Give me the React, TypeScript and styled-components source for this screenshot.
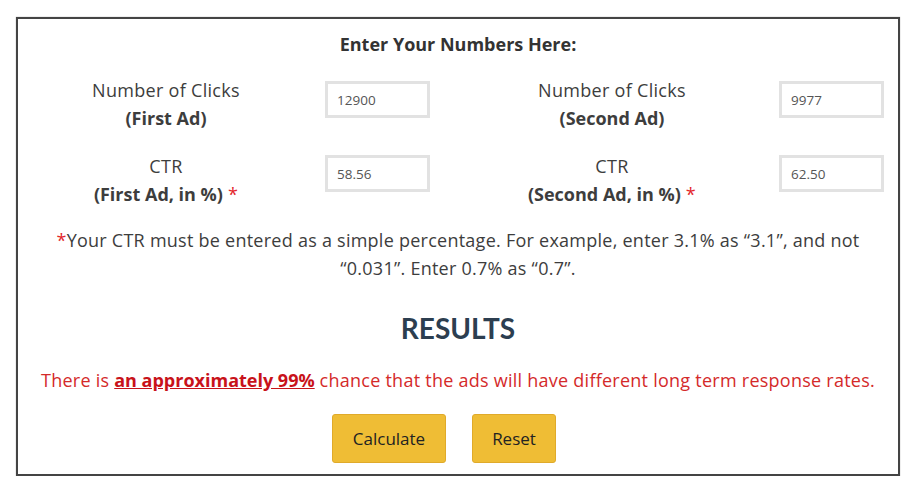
import React from "react";
import styled, { createGlobalStyle } from "styled-components";

const Global = createGlobalStyle`
  html, body { margin: 0; padding: 0; background: #fff; }
  body { font-family: "Open Sans", Lato, sans-serif; color: #3d3d3d; }
  * { box-sizing: border-box; }
`;

const Page = styled.div`
  padding: 17px 15px 0 16px;
  width: 915px;
`;

const Card = styled.div`
  width: 884px;
  height: 459px;
  border: 2px solid #444;
  box-shadow: 0 0 1px #999;
  display: flex;
  flex-direction: column;
  align-items: center;
`;

const Title = styled.div`
  font-weight: 700;
  font-size: 18px;
  line-height: 20px;
  margin-top: 15px;
  color: #333;
`;

const FormGrid = styled.div`
  align-self: stretch;
  display: grid;
  grid-template-columns: 296px 116px 349px 105px;
  row-gap: 20px;
  margin-top: 22px;
`;

const Label = styled.div<{ $shift?: number }>`
  font-size: 18px;
  line-height: 28px;
  letter-spacing: 0.3px;
  text-align: center;
  padding-left: ${(p) => p.$shift ?? 0}px;
  color: #3d3d3d;
`;

const Strong = styled.span`
  font-weight: 700;
  letter-spacing: 0;
`;

const Req = styled.span`
  color: #e3262b;
`;

const Field = styled.input<{ $top: number }>`
  justify-self: end;
  width: 105px;
  height: 37px;
  margin-top: ${(p) => p.$top}px;
  border: 3px solid #e2e2e2;
  padding: 0 0 0 9px;
  font-family: "Open Sans", Lato, sans-serif;
  font-size: 13.5px;
  color: #555;
  outline: none;
  background: #fff;
`;

const Note = styled.p`
  margin: 18px 0 0;
  width: 820px;
  font-size: 18px;
  line-height: 28px;
  letter-spacing: 0.25px;
  text-align: center;
  color: #3d3d3d;
`;

const Heading = styled.h2`
  margin: 29px 0 0;
  font-family: Lato, sans-serif;
  font-size: 28px;
  line-height: 34px;
  font-weight: 700;
  color: #2c3e50;
`;

const Result = styled.p`
  margin: 22px 0 0;
  font-size: 18px;
  line-height: 26px;
  letter-spacing: 0.25px;
  text-align: center;
  color: #d42a2a;
`;

const Emph = styled.span`
  font-weight: 700;
  letter-spacing: 0;
  text-decoration: underline;
  color: #c8121a;
`;

const Buttons = styled.div`
  display: flex;
  gap: 26px;
  margin-top: 21px;
  margin-right: 28px;
`;

const Btn = styled.button<{ $w: number }>`
  width: ${(p) => p.$w}px;
  height: 49px;
  background: #efbd35;
  border: 1px solid #e0aa2a;
  border-radius: 3px;
  font-family: "Open Sans", Lato, sans-serif;
  font-size: 17px;
  color: #222;
  cursor: pointer;
`;

export default function App() {
  return (
    <Page>
      <Global />
      <Card>
        <Title>Enter Your Numbers Here:</Title>
        <FormGrid>
          <Label>
            Number of Clicks
            <br />
            <Strong>(First Ad)</Strong>
          </Label>
          <Field $top={5} defaultValue="12900" />
          <Label $shift={15}>
            Number of Clicks
            <br />
            <Strong>(Second Ad)</Strong>
          </Label>
          <Field $top={5} defaultValue="9977" />
          <Label>
            CTR
            <br />
            <Strong>(First Ad, in %)</Strong> <Req>*</Req>
          </Label>
          <Field $top={3} defaultValue="58.56" />
          <Label $shift={15}>
            CTR
            <br />
            <Strong>(Second Ad, in %)</Strong> <Req>*</Req>
          </Label>
          <Field $top={3} defaultValue="62.50" />
        </FormGrid>
        <Note>
          <Req>*</Req>Your CTR must be entered as a simple percentage. For example, enter 3.1% as “3.1”, and not “0.031”. Enter 0.7% as “0.7”.
        </Note>
        <Heading>RESULTS</Heading>
        <Result>
          There is <Emph>an approximately 99%</Emph> chance that the ads will have different long term response rates.
        </Result>
        <Buttons>
          <Btn $w={114}>Calculate</Btn>
          <Btn $w={84}>Reset</Btn>
        </Buttons>
      </Card>
    </Page>
  );
}
